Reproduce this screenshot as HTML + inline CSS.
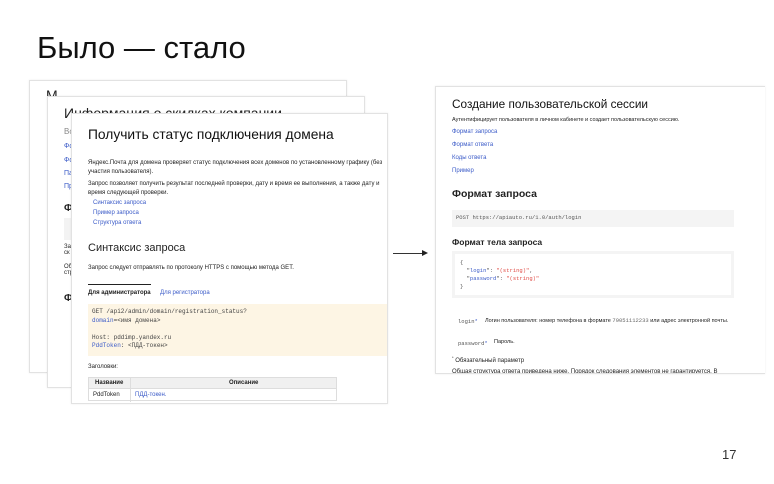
<!DOCTYPE html>
<html><head><meta charset="utf-8"><style>
*{margin:0;padding:0;box-sizing:border-box}
body{width:774px;height:484px;background:#fff;position:relative;overflow:hidden;font-family:"Liberation Sans",sans-serif;color:#222}
.pg{position:absolute;background:#fff;border:1px solid #e2e2e2;box-shadow:0 0 2px rgba(0,0,0,.08);overflow:hidden}
.a{position:absolute;white-space:nowrap}
.l{color:#3b5bc8}
.s{font-size:6px}
.m{font-family:"Liberation Mono",monospace}
</style></head><body>
<div class="a" style="left:37px;top:30px;font-size:31px;color:#111">Было — стало</div>
<div class="a" style="left:722px;top:447px;font-size:13px;color:#333">17</div>

<div class="pg" style="left:29px;top:80px;width:318px;height:293px">
<div class="a" style="left:16px;top:6px;font-size:14px">М</div>
</div>
<div class="pg" style="left:47px;top:96px;width:318px;height:292px">
<div class="a" style="left:16px;top:8px;font-size:14px">Информация о скидках компании</div>
<div class="a" style="left:16px;top:30px;font-size:8px;color:#888">Вс</div>
<div class="a l" style="left:16px;top:46px;font-size:7px">Фо</div>
<div class="a l" style="left:16px;top:60px;font-size:7px">Фо</div>
<div class="a l" style="left:16px;top:73px;font-size:7px">Па</div>
<div class="a l" style="left:16px;top:86px;font-size:7px">Пр</div>
<div class="a" style="left:16px;top:106px;font-size:10px;font-weight:bold">Ф</div>
<div style="position:absolute;left:16px;top:121px;width:20px;height:22px;background:#f3f3f3"></div>
<div class="a s" style="left:16px;top:147px">За<br>ск</div>
<div class="a s" style="left:16px;top:167px">Об<br>стр</div>
<div class="a" style="left:16px;top:196px;font-size:10px;font-weight:bold">Ф</div>
</div>
<div class="pg" style="left:71px;top:113px;width:317px;height:291px">
<div class="a" style="left:16px;top:13px;font-size:13.8px;color:#111">Получить статус подключения домена</div>
<div class="a s" style="left:16px;top:45px;line-height:9px">Яндекс.Почта для домена проверяет статус подключения всех доменов по установленному графику (без<br>участия пользователя).</div>
<div class="a s" style="left:16px;top:66px;line-height:9px">Запрос позволяет получить результат последней проверки, дату и время ее выполнения, а также дату и<br>время следующей проверки.</div>
<div class="a s l" style="left:21px;top:86px">Синтаксис запроса</div>
<div class="a s l" style="left:21px;top:96px">Пример запроса</div>
<div class="a s l" style="left:21px;top:106px">Структура ответа</div>
<div class="a" style="left:16px;top:128px;font-size:11px">Синтаксис запроса</div>
<div class="a s" style="left:16px;top:151px">Запрос следует отправлять по протоколу HTTPS с помощью метода GET.</div>
<div style="position:absolute;left:16px;top:170px;width:63px;height:1px;background:#222"></div>
<div class="a s" style="left:16px;top:176px;font-weight:bold">Для администратора</div>
<div class="a s l" style="left:88px;top:176px">Для регистратора</div>
<div style="position:absolute;left:16px;top:190px;width:301px;height:52px;background:#fdf5e4"></div>
<div class="a m" style="left:20px;top:194px;font-size:6px;line-height:8.6px;color:#444">GET /api2/admin/domain/registration_status?<br><span class="l">domain</span>=&lt;имя домена&gt;<br><br>Host: pddimp.yandex.ru<br><span class="l">PddToken</span>: &lt;ПДД-токен&gt;</div>
<div class="a s" style="left:16px;top:250px">Заголовки:</div>
<div style="position:absolute;left:16px;top:263px;width:249px;height:24px;border:1px solid #ddd">
<div style="height:11px;background:#f0f0f0;border-bottom:1px solid #ddd"></div>
<div style="position:absolute;left:41px;top:0;width:1px;height:24px;background:#ddd"></div>
<div class="a s" style="left:6px;top:2px;font-weight:bold">Название</div>
<div class="a s" style="left:140px;top:2px;font-weight:bold">Описание</div>
<div class="a s" style="left:4px;top:14px">PddToken</div>
<div class="a s l" style="left:46px;top:14px">ПДД-токен.</div>
</div>
</div>

<div style="position:absolute;left:393px;top:253px;width:30px;height:1px;background:#333"></div>
<div style="position:absolute;left:422px;top:250px;border-left:6px solid #222;border-top:3.5px solid transparent;border-bottom:3.5px solid transparent"></div>

<div class="pg" style="left:435px;top:86px;width:330px;height:288px;border-right:none">
<div class="a" style="left:16px;top:10px;font-size:11.8px;color:#111">Создание пользовательской сессии</div>
<div class="a" style="left:16px;top:30px;font-size:5.5px">Аутентифицирует пользователя в личном кабинете и создает пользовательскую сессию.</div>
<div class="a s l" style="left:16px;top:42px">Формат запроса</div>
<div class="a s l" style="left:16px;top:55px">Формат ответа</div>
<div class="a s l" style="left:16px;top:68px">Коды ответа</div>
<div class="a s l" style="left:16px;top:81px">Пример</div>
<div class="a" style="left:16px;top:101px;font-size:10.5px;font-weight:bold">Формат запроса</div>
<div style="position:absolute;left:16px;top:123px;width:282px;height:17px;background:#f4f4f4"></div>
<div class="a m" style="left:20px;top:127px;font-size:5.5px;color:#555">POST https://apiauto.ru/1.0/auth/login</div>
<div class="a" style="left:16px;top:150px;font-size:8.5px;font-weight:bold">Формат тела запроса</div>
<div style="position:absolute;left:16px;top:164px;width:282px;height:47px;background:#f4f4f4"><div style="margin:3px;height:41px;background:#fff"></div></div>
<div class="a m" style="left:24px;top:172px;font-size:5.5px;line-height:8px;color:#555">{<br>&nbsp;&nbsp;"<span class="l">login</span>": <span style="color:#e0504a">"(string)"</span>,<br>&nbsp;&nbsp;"<span class="l">password</span>": <span style="color:#e0504a">"(string)"</span><br>}</div>
<div class="a m" style="left:22px;top:231px;font-size:5.5px;color:#555">login<span class="l">*</span></div>
<div class="a" style="left:49px;top:230px;font-size:5.5px">Логин пользователя: номер телефона в формате <span class="m" style="color:#666">79051112233</span> или адрес электронной почты.</div>
<div class="a m" style="left:22px;top:253px;font-size:5.5px;color:#555">password<span class="l">*</span></div>
<div class="a" style="left:58px;top:252px;font-size:5.5px">Пароль.</div>
<div class="a s" style="left:16px;top:268px"><sup style="font-size:4px">*</sup> Обязательный параметр</div>
<div class="a s" style="left:16px;top:282px">Общая структура ответа приведена ниже. Порядок следования элементов не гарантируется. В</div>
</div>
</body></html>
